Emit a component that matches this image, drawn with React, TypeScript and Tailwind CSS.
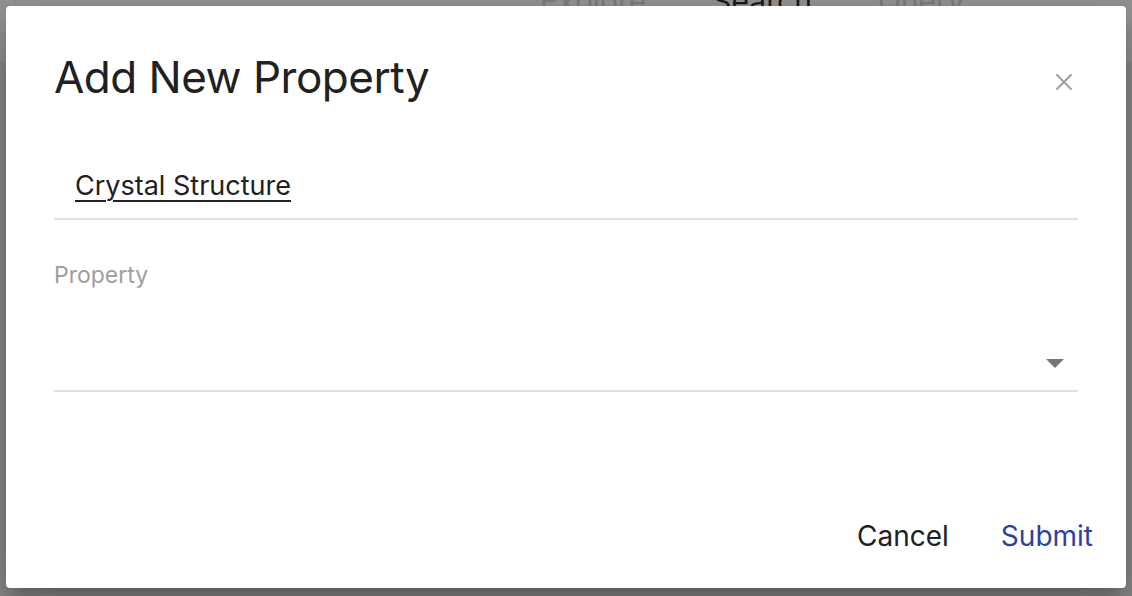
import { X } from 'lucide-react';

export default function App() {
  return (
    <div className="relative h-[596px] w-[1132px] overflow-hidden bg-[#8b8b8b] font-['Inter',sans-serif]">
      {/* page behind the overlay */}
      <div className="h-[62px] bg-[#959595]">
        <div className="ml-[540px] flex gap-[66px] pt-[-12px] text-[30px] leading-none -translate-y-[14px]">
          <span className="text-[#7d7d7d]">Explore</span>
          <span className="text-[#1a1a1a]">Search</span>
          <span className="text-[#7d7d7d]">Query</span>
        </div>
      </div>

      <div className="absolute left-[6px] top-[6px] flex h-[582px] w-[1120px] flex-col rounded-[4px] bg-white shadow-[0_11px_15px_-7px_rgba(0,0,0,0.2),0_24px_38px_3px_rgba(0,0,0,0.14),0_9px_46px_8px_rgba(0,0,0,0.12)]">
        <div className="flex items-start justify-between px-[48px] pt-[44px]">
          <h2 className="text-[44px] leading-[54px] tracking-[-0.5px] text-[#212121]">Add New Property</h2>
          <button className="mt-[18px] text-[#9e9e9e]">
            <X size={28} strokeWidth={1.6} />
          </button>
        </div>

        <div className="mx-[48px] mt-[66px] border-b-2 border-[#e0e0e0] pb-[16px] pl-[21px]">
          <span className="text-[27px] leading-[32px] text-[#212121] underline underline-offset-[5px] decoration-[1.5px]">
            Crystal Structure
          </span>
        </div>

        <div className="mx-[48px] mt-[41px]">
          <div className="text-[23px] leading-[28px] text-[#9e9e9e]">Property</div>
          <div className="flex h-[103px] items-end justify-end border-b-2 border-[#e0e0e0] pb-[22px] pr-[14px]">
            <svg width="18" height="9" viewBox="0 0 18 9">
              <path d="M0 0h18L9 9z" fill="#757575" />
            </svg>
          </div>
        </div>

        <div className="mt-auto flex justify-end gap-[52px] pb-[38px] pr-[33px]">
          <button className="text-[28px] leading-none text-[#212121]">Cancel</button>
          <button className="text-[28px] leading-none text-[#303f9f]">Submit</button>
        </div>
      </div>
    </div>
  );
}
